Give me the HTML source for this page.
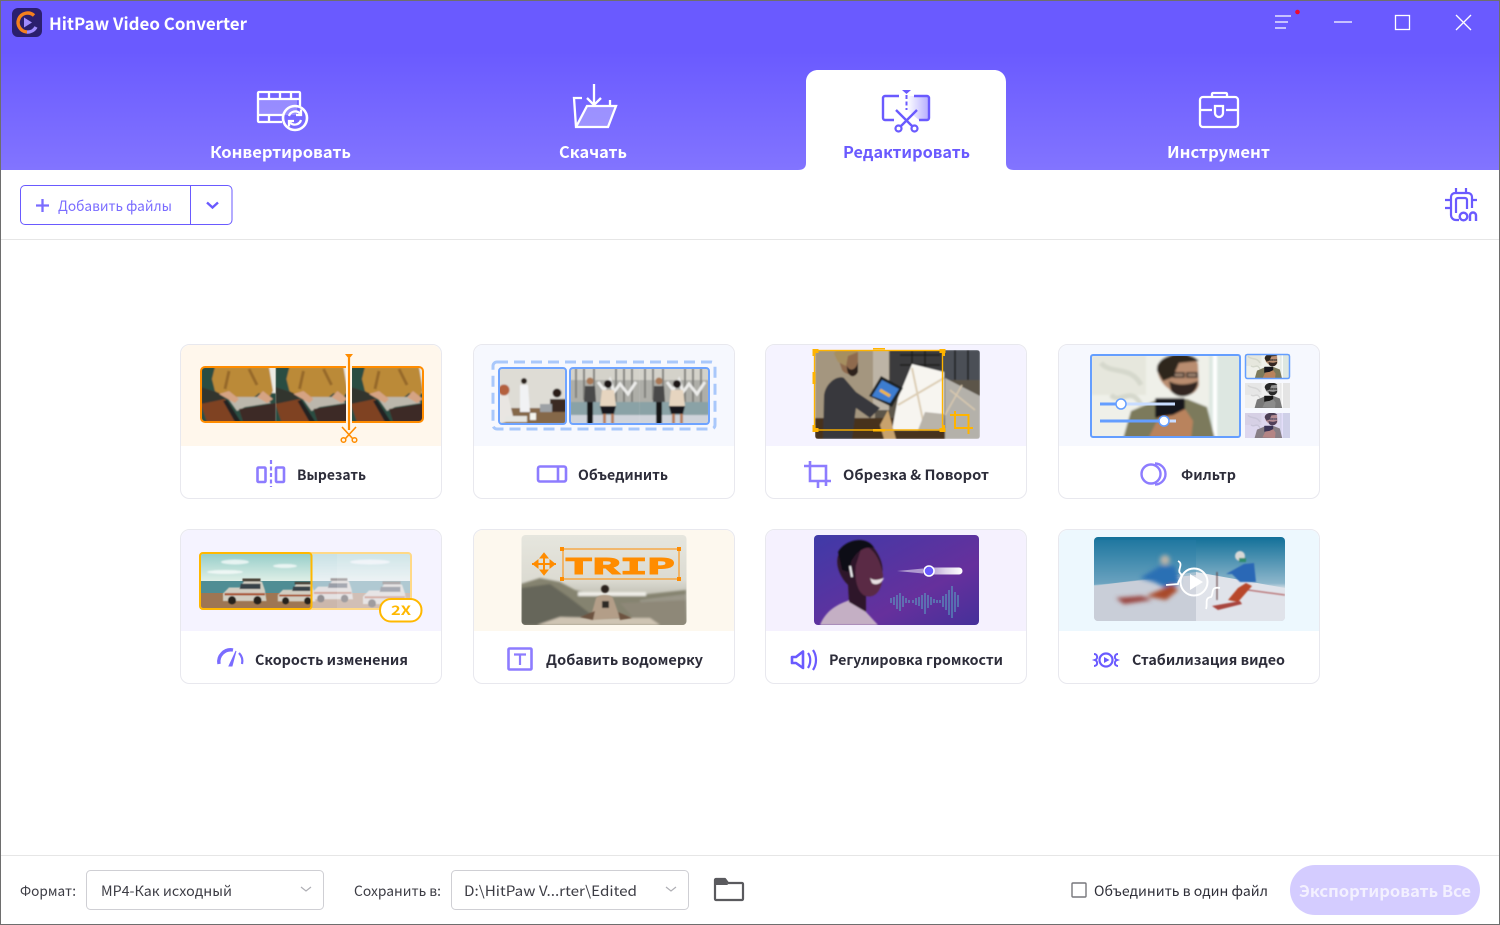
<!DOCTYPE html>
<html lang="ru"><head><meta charset="utf-8"><title>HitPaw Video Converter</title>
<style>
html,body{margin:0;padding:0;background:#fff;width:1500px;height:925px;overflow:hidden}
svg{display:block}
text{font-family:"Noto Sans CJK SC","Liberation Sans",sans-serif}
.h{font-size:16px;font-weight:700;fill:#fff}
.l{font-size:14px;font-weight:700;fill:#2d2d3a}
.f{font-size:14px;fill:#3c3c44}
.w{fill:none;stroke:#fff;stroke-width:2.300}
</style></head><body>
<svg width="1500" height="925" viewBox="0 0 1500 925" xmlns="http://www.w3.org/2000/svg">
<defs>
<linearGradient id="hd" x1="0" y1="0" x2="0" y2="1"><stop offset="0" stop-color="#6a5aff"/><stop offset=".3" stop-color="#6a5aff"/><stop offset="1" stop-color="#8274ff"/></linearGradient>
<linearGradient id="ed" x1="0" y1="0" x2="1" y2="0"><stop offset="0" stop-color="#fff"/><stop offset="1" stop-color="#b5adff"/></linearGradient>
<linearGradient id="pur" x1="0" y1="0" x2="1" y2="1"><stop offset="0" stop-color="#3f3aa8"/><stop offset=".65" stop-color="#66309c"/><stop offset="1" stop-color="#45309a"/></linearGradient>
<linearGradient id="sky" x1="0" y1="0" x2="0" y2="1"><stop offset="0" stop-color="#94cdc8"/><stop offset="1" stop-color="#e2f0e8"/></linearGradient>
<linearGradient id="ski" x1="0" y1="0" x2="0" y2="1"><stop offset="0" stop-color="#127099"/><stop offset=".55" stop-color="#8db6cb"/><stop offset=".62" stop-color="#dfe3e8"/><stop offset="1" stop-color="#c7ccd6"/></linearGradient>
<linearGradient id="sl" x1="0" y1="0" x2="1" y2="0"><stop offset="0" stop-color="#fff" stop-opacity=".5"/><stop offset=".5" stop-color="#fff" stop-opacity=".8"/><stop offset="1" stop-color="#fff"/></linearGradient>
<linearGradient id="mt" x1="0" y1="0" x2="0" y2="1"><stop offset="0" stop-color="#e6e6de"/><stop offset=".5" stop-color="#dcdbd2"/><stop offset="1" stop-color="#8f8d7c"/></linearGradient>
<filter id="b" x="-5%" y="-5%" width="110%" height="110%"><feGaussianBlur stdDeviation=".7"/></filter>
<filter id="m" x="-5%" y="-5%" width="110%" height="110%"><feGaussianBlur stdDeviation="1.100"/></filter>
<filter id="bb" x="-10%" y="-10%" width="120%" height="120%"><feGaussianBlur stdDeviation="2"/></filter>
<clipPath id="c1"><rect x="201" y="367" width="222" height="55" rx="4"/></clipPath>
<clipPath id="c2a"><rect x="499" y="368" width="67" height="56" rx="3"/></clipPath>
<clipPath id="c2b"><rect x="570" y="368" width="139" height="56" rx="3"/></clipPath>
<clipPath id="c3"><rect x="815" y="350" width="165" height="89" rx="3"/></clipPath>
<clipPath id="c4"><rect x="1091" y="355" width="149" height="82" rx="2"/></clipPath>
<clipPath id="c5"><rect x="200" y="553" width="210" height="56" rx="3"/></clipPath>
<clipPath id="c6"><rect x="521.500" y="535" width="165" height="90" rx="4"/></clipPath>
<clipPath id="c7"><rect x="814" y="535" width="165" height="90" rx="4"/></clipPath>
<clipPath id="c8"><rect x="1094" y="537" width="191" height="84" rx="4"/></clipPath>
<clipPath id="c1a"><rect x="0" y="0" width="75" height="55"/></clipPath>

<g id="hands" clip-path="url(#c1a)"><g filter="url(#b)">
<rect width="75" height="55" fill="#2b4d43"/>
<rect x="68" y="0" width="7" height="26" fill="#ecebe4"/>
<path d="M14 0H68L72 24 68 30 58 26 52 31H26L14 24 11 12Z" fill="#bb8a38"/>
<path d="M28 4L24 22M48 2L56 18" stroke="#96692a" stroke-width="3" fill="none"/>
<path d="M0 20L18 26 24 32 6 38 0 36Z" fill="#33352f"/>
<path d="M0 37L24 32 38 55H6Z" fill="#7f4222"/>
<path d="M26 30H62L70 36 44 40 36 44Z" fill="#bcb7ac"/>
<path d="M18 27L34 36 38 32 28 24ZM62 24L72 32 66 36 56 30Z" fill="#d5a383"/>
<path d="M38 42L75 36V55H42Z" fill="#3d2c25"/>
<path d="M26 33L40 55H34L22 34Z" fill="#242424"/>
</g></g>

<g id="couple" filter="url(#b)">
<rect width="70" height="56" fill="#aeaea8"/>
<rect x="0" y="0" width="70" height="12" fill="#d4d2ca"/>
<path d="M6 0V30M14 0V32M24 0V30M46 0V34M54 0V34M62 0V34" stroke="#80807c" stroke-width="2"/>
<path d="M28 14L34 22 40 12 44 24 50 16 58 26 66 14" stroke="#ececea" stroke-width="3" fill="none"/>
<rect x="0" y="34" width="70" height="13" fill="#8aa2a6"/>
<rect x="0" y="47" width="70" height="9" fill="#cfd3da"/>
<circle cx="20" cy="13" r="3.500" fill="#a87854"/>
<path d="M15 18H25L26 34H23L22 56H18L17 34H14Z" fill="#4a4a48"/>
<path d="M17 34H23V56H17Z" fill="#151515"/>
<circle cx="38" cy="16" r="4" fill="#1d1612"/>
<path d="M32 22H44L46 38H30Z" fill="#e6d5c0"/>
<path d="M30 38H46L44 46H32Z" fill="#15151a"/>
<path d="M33 46H36V56H33ZM41 46H44V56H41Z" fill="#b57f5f"/>
</g>

<g id="man" filter="url(#m)">
<rect width="150" height="84" fill="#eff0e9"/>
<path d="M0 0H55V40H0Z" fill="#e6e7dd"/>
<path d="M10 8C20 20 40 10 50 30M20 40C30 50 40 30 50 50" stroke="#d5d8cc" stroke-width="5" fill="none"/>
<rect x="118" y="0" width="32" height="84" fill="#dde7e1"/>
<path d="M124 0V84" stroke="#fff" stroke-width="4"/>
<path d="M32 84L40 56 68 44 96 44 116 52 124 84Z" fill="#7b7a5c"/>
<path d="M66 12C68 0 98 -2 107 8L108 30C104 44 84 44 78 34 72 30 66 22 66 12Z" fill="#b98d6f"/>
<path d="M66 16C64 -2 98 -6 108 6L88 8 82 22 72 26Z" fill="#2e251d"/>
<path d="M78 26C86 31 98 30 107 26 106 42 88 46 80 36Z" fill="#322820"/>
<path d="M83 18H93V22H83ZM96 18H106V22H96Z" fill="#a98b77" stroke="#1e1e1e" stroke-width="1.500"/>
<rect x="64" y="43" width="30" height="20" rx="2" fill="#18181a"/>
<path d="M58 82L68 62 82 60 94 54 102 66 100 84Z" fill="#b9835d"/>
</g>

<g id="car" filter="url(#b)">
<path d="M-28 26L-20 18H-6L0 10H24L28 22 30 36H-28Z" fill="#d2cec2"/>
<path d="M-26 27H28" stroke="#a9532f" stroke-width="3"/>
<path d="M-4 13H22V20H-6Z" fill="#39424a"/>
<circle cx="-16" cy="35" r="5.500" fill="#26241f"/><circle cx="18" cy="35" r="5.500" fill="#26241f"/>
<rect x="-2" y="6" width="24" height="4" fill="#4a4238"/>
</g>
</defs>

<rect width="1500" height="925" fill="#fff"/>
<rect x="0" y="0" width="1500" height="170" fill="url(#hd)"/>

<!-- logo -->
<rect x="12" y="8" width="30" height="29" rx="6" fill="#2b1f6e"/>
<path d="M34 15.500A9.500 9.500 0 1 0 27 32" fill="none" stroke="#f5801f" stroke-width="3.400"/>
<path d="M27 32A9.500 9.500 0 0 0 36 27" fill="none" stroke="#a08cff" stroke-width="3.400"/>
<path d="M24 17.500L32 22.500 24 27.500Z" fill="#a08cff"/>
<text x="49" y="30" class="h" style="font-size:17px" textLength="198" lengthAdjust="spacingAndGlyphs">HitPaw Video Converter</text>

<!-- window controls -->
<path d="M1275 16H1291M1275 22H1288M1275 28H1286" stroke="#fff" stroke-width="1.300" fill="none"/>
<circle cx="1297.500" cy="12" r="2.300" fill="#ef0c2c"/>
<path d="M1334 22H1352" stroke="#fff" stroke-width="1.300"/>
<rect x="1395.500" y="15.500" width="14" height="14" fill="none" stroke="#fff" stroke-width="1.300"/>
<path d="M1456 15L1471 30M1471 15L1456 30" stroke="#fff" stroke-width="1.300"/>

<!-- tab convert icon -->
<rect x="259" y="100" width="38" height="15" fill="#fff" opacity=".25"/>
<path d="M300 106V93a1 1 0 0 0-1-1H259a1 1 0 0 0-1 1V121a1 1 0 0 0 1 1H282" class="w"/>
<path d="M258 99H300M258 115H283M269 92V99M280 92V99M291 92V99M269 115V122" class="w"/>
<circle cx="295" cy="118" r="12" class="w" fill="none" style="stroke-width:2.600"/>
<path d="M289 116a6.500 6.500 0 0 1 11-2.500M301 120a6.500 6.500 0 0 1-11 2.500" class="w"/>
<path d="M301 109.500V115H296M289 126.500V121H294" class="w"/>
<text x="210" y="158" class="h" textLength="141" lengthAdjust="spacingAndGlyphs">Конвертировать</text>

<!-- download icon -->
<path d="M587 106H616L608 127H577Z" fill="#fff" opacity=".28"/>
<path d="M594 84V105M587 98L594 105 601 98" class="w"/>
<path d="M582 98H574L576 127H608L616 106H610V100M610 106H587L576 127" class="w"/>
<text x="559" y="158" class="h" textLength="68" lengthAdjust="spacingAndGlyphs">Скачать</text>

<!-- active tab -->
<path d="M798 170C803 170 806 168 806 163V82C806 75 811 70 818 70H994C1001 70 1006 75 1006 82V163C1006 168 1009 170 1014 170Z" fill="#fff"/>
<path d="M907 96H927a2 2 0 0 1 2 2V118a2 2 0 0 1-2 2H919L907 110Z" fill="url(#ed)" stroke="none"/>
<path d="M899 96H885a2 2 0 0 0-2 2V118a2 2 0 0 0 2 2H894M914 96H927a2 2 0 0 1 2 2V118a2 2 0 0 1-2 2H919" fill="none" stroke="#6a5aff" stroke-width="2.400"/>
<path d="M902 90H911L906.500 94Z" fill="#6a5aff"/>
<path d="M906.500 95V110" stroke="#6a5aff" stroke-width="2" stroke-dasharray="4 2.500"/>
<path d="M896 110L912 126M917 110L901 126" stroke="#6a5aff" stroke-width="2.400" fill="none"/>
<circle cx="898.500" cy="128.500" r="3" fill="none" stroke="#6a5aff" stroke-width="2.200"/>
<circle cx="914.500" cy="128.500" r="3" fill="none" stroke="#6a5aff" stroke-width="2.200"/>
<text x="843" y="158" class="h" style="fill:#6a5aff" textLength="127" lengthAdjust="spacingAndGlyphs">Редактировать</text>

<!-- toolbox icon -->
<path d="M1212 97V94a1 1 0 0 1 1-1H1226a1 1 0 0 1 1 1V97" class="w"/>
<rect x="1200" y="97" width="38" height="30" rx="3" class="w"/>
<path d="M1200 110H1212M1226 110H1238" class="w"/>
<path d="M1215 106H1223V113a4 4 0 0 1-8 0Z" class="w"/>
<text x="1167" y="158" class="h" textLength="103" lengthAdjust="spacingAndGlyphs">Инструмент</text>

<!-- toolbar -->
<rect x="20.500" y="185.500" width="211.500" height="39" rx="4.500" fill="#fff" stroke="#6a5aff"/>
<path d="M190.500 185.500V224.500" stroke="#6a5aff"/>
<path d="M42.500 199V212M36 205.500H49" stroke="#7a6cff" stroke-width="2.300"/>
<text x="58" y="211" class="f" style="fill:#7a6cff" textLength="114" lengthAdjust="spacingAndGlyphs">Добавить файлы</text>
<path d="M207 202.500L212.500 207.500 218 202.500" fill="none" stroke="#6a5aff" stroke-width="2.400"/>
<path d="M0 239.500H1500" stroke="#e6e6e6"/>
<!-- on icon -->
<path d="M1459 220H1456a5 5 0 0 1-5-5V197a4 4 0 0 1 4-4H1468a4 4 0 0 1 4 4V208M1456 213V200a2 2 0 0 1 2-2H1465a2 2 0 0 1 2 2V209M1456 188V193M1466 188V193M1445 200H1451M1445 208H1451M1472 200H1477" fill="none" stroke="#6a5aff" stroke-width="2.200"/>
<circle cx="1463.500" cy="216.500" r="3.800" fill="#fff" stroke="#6a5aff" stroke-width="2.400"/>
<path d="M1470 221V215.500a3 3 0 0 1 6 0V221" fill="none" stroke="#6a5aff" stroke-width="2.400"/>

<!-- cards -->
<g fill="#fff" stroke="#e8e8ee">
<rect x="180.500" y="344.500" width="261" height="154" rx="9"/>
<rect x="473.500" y="344.500" width="261" height="154" rx="9"/>
<rect x="765.500" y="344.500" width="261" height="154" rx="9"/>
<rect x="1058.500" y="344.500" width="261" height="154" rx="9"/>
<rect x="180.500" y="529.500" width="261" height="154" rx="9"/>
<rect x="473.500" y="529.500" width="261" height="154" rx="9"/>
<rect x="765.500" y="529.500" width="261" height="154" rx="9"/>
<rect x="1058.500" y="529.500" width="261" height="154" rx="9"/>
</g>
<path d="M181 446V354a9 9 0 0 1 9-9H432a9 9 0 0 1 9 9V446Z" fill="#fff7ec"/>
<path d="M474 446V354a9 9 0 0 1 9-9H725a9 9 0 0 1 9 9V446Z" fill="#f6f8fe"/>
<path d="M766 446V354a9 9 0 0 1 9-9H1017a9 9 0 0 1 9 9V446Z" fill="#f5f3ff"/>
<path d="M1059 446V354a9 9 0 0 1 9-9H1310a9 9 0 0 1 9 9V446Z" fill="#f6f8fe"/>
<path d="M181 631V539a9 9 0 0 1 9-9H432a9 9 0 0 1 9 9V631Z" fill="#f5f3ff"/>
<path d="M474 631V539a9 9 0 0 1 9-9H725a9 9 0 0 1 9 9V631Z" fill="#fdf8ee"/>
<path d="M766 631V539a9 9 0 0 1 9-9H1017a9 9 0 0 1 9 9V631Z" fill="#f5f1fe"/>
<path d="M1059 631V539a9 9 0 0 1 9-9H1310a9 9 0 0 1 9 9V631Z" fill="#edf8fe"/>

<!-- card 1 -->
<g clip-path="url(#c1)">
<use href="#hands" transform="translate(201 367)"/>
<use href="#hands" transform="translate(275.500 367)"/>
<use href="#hands" transform="translate(351 367)"/>
</g>
<rect x="201" y="367" width="222" height="55" rx="4" fill="none" stroke="#ff8c00" stroke-width="2"/>
<rect x="346" y="358" width="6" height="72" fill="#fff7ec"/>
<path d="M349 358V430" stroke="#ff8c00" stroke-width="2.200"/>
<path d="M345 354H353L349 359Z" fill="#ff8c00"/>
<path d="M342 427L353 439M356 427L345 439" stroke="#ff8c00" stroke-width="1.600" fill="none"/>
<circle cx="343.500" cy="440" r="2.300" fill="none" stroke="#ff8c00" stroke-width="1.500"/>
<circle cx="354.500" cy="440" r="2.300" fill="none" stroke="#ff8c00" stroke-width="1.500"/>
<g fill="none" stroke="#8d7cff" stroke-width="2.600">
<rect x="257.500" y="467.500" width="8" height="14.500" rx="1"/>
<rect x="276" y="467.500" width="8" height="14.500" rx="1"/>
</g>
<path d="M271 460V487" stroke="#8d7cff" stroke-width="2.200" stroke-dasharray="4 2.500"/>
<text x="297" y="480" class="l" textLength="69" lengthAdjust="spacingAndGlyphs">Вырезать</text>

<!-- card 2 -->
<rect x="493" y="362" width="222" height="67" rx="4" fill="none" stroke="#a9c8fb" stroke-width="3" stroke-dasharray="11 6"/>
<g clip-path="url(#c2a)"><g filter="url(#b)">
<rect x="499" y="368" width="67" height="56" fill="#dedcd5"/>
<rect x="499" y="408" width="67" height="16" fill="#85674a"/>
<path d="M498 388C502 384 510 386 508 396L514 420 499 424Z" fill="#e9e6e2"/>
<circle cx="504" cy="390" r="5.500" fill="#b4603d"/>
<circle cx="524" cy="381" r="3" fill="#2b211b"/>
<path d="M520 385H528L530 412H520Z" fill="#f1f2f4"/>
<circle cx="557" cy="393" r="4.500" fill="#2a1e18"/>
<path d="M550 399H566V412H550Z" fill="#3a2c24"/>
<rect x="540" y="404" width="12" height="8" fill="#9da1a5"/>
<rect x="530" y="413" width="6" height="7" fill="#f5f5f0"/>
<rect x="505" y="416" width="22" height="6" fill="#e6e6e2"/>
</g></g>
<g clip-path="url(#c2b)">
<use href="#couple" transform="translate(570 368)"/>
<use href="#couple" transform="translate(639 368)"/>
</g>
<rect x="499" y="368" width="67" height="56" rx="3" fill="none" stroke="#6ea3ff" stroke-width="2"/>
<rect x="570" y="368" width="139" height="56" rx="3" fill="none" stroke="#6ea3ff" stroke-width="2"/>
<rect x="538" y="466.500" width="28" height="15" rx="2" fill="none" stroke="#8d7cff" stroke-width="2.600"/>
<path d="M558 466V482" stroke="#8d7cff" stroke-width="2.600"/>
<text x="578" y="480" class="l" textLength="90" lengthAdjust="spacingAndGlyphs">Объединить</text>

<!-- card 3 -->
<g clip-path="url(#c3)"><g filter="url(#b)">
<rect x="815" y="350" width="165" height="89" fill="#5c5549"/>
<rect x="815" y="350" width="60" height="75" fill="#a4967f"/>
<rect x="873" y="350" width="16" height="60" fill="#bdb4a6"/>
<rect x="890" y="350" width="53" height="38" fill="#3a3a3c"/>
<rect x="943" y="350" width="37" height="30" fill="#4c5056"/>
<path d="M900 355H940M900 365H940M912 350V385M925 350V385M955 350V380M968 350V380" stroke="#1b1b1c" stroke-width="1.500"/>
<rect x="815" y="418" width="165" height="21" fill="#46301f"/>
<path d="M945 378L980 396V439H945Z" fill="#b4b1aa"/>
<path d="M898 398L912 364 944 372V430H892Z" fill="#f7f5f0"/>
<path d="M912 368L925 430M898 405L944 378" stroke="#dccdb4" stroke-width="2"/>
<path d="M925 412L944 414V430H918Z" fill="#b9b4aa"/>
<path d="M945 415L962 385M950 390L975 410" stroke="#d8c8ae" stroke-width="1.500"/>
<path d="M823 439L824 395C826 382 838 375 844 378L856 392 880 408 870 418 856 408 852 439Z" fill="#37383c"/>
<path d="M836 352H858V368C856 376 846 376 842 370Z" fill="#8f6a4e"/>
<path d="M834 354C836 346 856 344 858 352L848 356 846 366 838 362Z" fill="#a68f60"/>
<path d="M847 366C850 372 856 370 858 362V372C854 380 846 376 847 366Z" fill="#2d221b"/>
<path d="M869 396L881 376 903 388 892 407Z" fill="#1f2024"/>
<path d="M872 396L882 380 899 389 890 403Z" fill="#3e7dd0"/>
<path d="M880 390L890 396" stroke="#efb640" stroke-width="3"/>
<path d="M880 425L888 410 896 439H884Z" fill="#c8a26d"/>
</g></g>
<rect x="814.500" y="350.500" width="128" height="79.500" fill="none" stroke="#ffb400" stroke-width="1.400"/>
<g fill="#ffb400">
<rect x="812.500" y="349" width="6" height="4"/><rect x="812.500" y="349" width="3" height="7"/>
<rect x="939.500" y="349" width="6" height="4"/><rect x="942" y="349" width="3" height="7"/>
<rect x="812.500" y="428" width="6" height="4"/><rect x="812.500" y="425" width="3" height="7"/>
<rect x="939.500" y="428" width="6" height="4"/><rect x="942" y="425" width="3" height="7"/>
<rect x="873" y="348" width="12" height="1.500"/>
<rect x="873" y="429" width="12" height="2.500"/>
<rect x="812.500" y="372" width="3" height="12"/>
</g>
<path d="M950 415H968.500V434M955 411V428H973" fill="none" stroke="#ffb400" stroke-width="2"/>
<path d="M804 466H826V486M810 461V481H831M818 481V488" fill="none" stroke="#8d7cff" stroke-width="2.600"/>
<text x="843" y="480" class="l" textLength="146" lengthAdjust="spacingAndGlyphs">Обрезка &amp; Поворот</text>

<!-- card 4 -->
<g clip-path="url(#c4)"><use href="#man" transform="translate(1091 355)"/></g>
<rect x="1091" y="355" width="149" height="82" rx="2" fill="none" stroke="#649eff" stroke-width="2"/>
<path d="M1100 404H1175" stroke="#c8dcff" stroke-width="3"/>
<path d="M1100 404H1121" stroke="#649eff" stroke-width="3"/>
<circle cx="1121" cy="404" r="5" fill="#fff" stroke="#649eff" stroke-width="1.500"/>
<path d="M1100 421H1176" stroke="#c8dcff" stroke-width="3"/>
<path d="M1100 421H1164" stroke="#649eff" stroke-width="3"/>
<circle cx="1164" cy="421" r="5" fill="#fff" stroke="#649eff" stroke-width="1.500"/>
<g transform="translate(1245 354)"><svg width="45" height="25" viewBox="0 0 150 84" preserveAspectRatio="none"><use href="#man"/></svg></g>
<rect x="1245.500" y="354.500" width="44" height="24" rx="2" fill="none" stroke="#649eff" stroke-width="1.500"/>
<g transform="translate(1245 383)" style="filter:grayscale(1)"><svg width="45" height="25" viewBox="0 0 150 84" preserveAspectRatio="none"><use href="#man"/></svg></g>
<g transform="translate(1245 413)"><svg width="45" height="25" viewBox="0 0 150 84" preserveAspectRatio="none"><use href="#man"/><rect width="150" height="84" fill="#a98cff" opacity=".25"/></svg></g>
<circle cx="1151" cy="474" r="9.500" fill="none" stroke="#8d7cff" stroke-width="2.400"/>
<path d="M1155 463.500A10.500 10.500 0 0 1 1155 484.500" fill="none" stroke="#8d7cff" stroke-width="2.400"/>
<text x="1181" y="480" class="l" textLength="55" lengthAdjust="spacingAndGlyphs">Фильтр</text>

<!-- card 5 -->
<g clip-path="url(#c5)">
<rect x="200" y="553" width="210" height="29" fill="url(#sky)"/>
<g fill="#fff" opacity=".7" filter="url(#b)"><ellipse cx="235" cy="562" rx="14" ry="2.500"/><ellipse cx="285" cy="566" rx="12" ry="2"/><ellipse cx="225" cy="572" rx="18" ry="2"/><ellipse cx="370" cy="562" rx="20" ry="2.500"/></g>
<rect x="200" y="581" width="210" height="13" fill="#4f8d94"/>
<rect x="200" y="593" width="210" height="16" fill="#9e7653"/>
<use href="#car" transform="translate(244 574) scale(.75)"/>
<use href="#car" transform="translate(296 578) scale(.65)"/>
<use href="#car" transform="translate(332 574) scale(.7)"/>
<use href="#car" transform="translate(384 577) scale(.75)"/>
<rect x="312" y="553" width="98" height="56" fill="#f5f3ff" opacity=".52"/>
<rect x="337" y="553" width="75" height="56" fill="#fff" opacity=".12"/>
</g>
<rect x="200" y="553" width="211" height="56" rx="3" fill="none" stroke="#ffd987" stroke-width="2"/>
<rect x="200" y="553" width="111.500" height="56" rx="3" fill="none" stroke="#ffb800" stroke-width="2"/>
<rect x="380" y="599" width="41.500" height="22.500" rx="11" fill="#fff" stroke="#ffb800" stroke-width="2"/>
<text x="391" y="615" style="font-size:13px;font-weight:700;fill:#ffb800" textLength="20" lengthAdjust="spacingAndGlyphs">2X</text>
<path d="M219 664A12 12 0 0 1 233 650" fill="none" stroke="#7a6cff" stroke-width="3.400"/>
<path d="M239 653A12 12 0 0 1 242 664" fill="none" stroke="#7a6cff" stroke-width="2.200"/>
<path d="M236 651L229 666 232 666Z" fill="#7a6cff" stroke="#7a6cff"/>
<text x="255" y="665" class="l" textLength="153" lengthAdjust="spacingAndGlyphs">Скорость изменения</text>

<!-- card 6 -->
<g clip-path="url(#c6)">
<rect x="521.500" y="535" width="165" height="90" fill="url(#mt)"/>
<g filter="url(#m)">
<path d="M521 584L540 578 560 582 575 590 600 596 640 595 686 590V625H521Z" fill="#85836f"/>
<path d="M521 588L550 584 570 598 605 625H521Z" fill="#66665a"/>
<rect x="578" y="592" width="68" height="4" fill="#efeee8"/>
<path d="M640 600L686 594V625H640Z" fill="#9a9688"/>
<path d="M620 603L686 600V625H640Z" fill="#8e8878"/>
<path d="M537 625L560 617 600 618 650 618 660 625Z" fill="#cfc4b3"/>
</g>
<g filter="url(#b)">
<circle cx="605" cy="589" r="4" fill="#2c221c"/>
<path d="M590 620L596 598C600 594 610 594 613 598L620 618Z" fill="#b39e88"/>
<rect x="602" y="601" width="7" height="7" fill="#2d2a28"/>
<path d="M580 617L595 611 593 620ZM618 612L632 618 620 620Z" fill="#6d5240"/>
</g>
</g>
<text x="565" y="574" style="font-family:'Liberation Mono','DejaVu Sans Mono',monospace;font-size:24px;font-weight:700;fill:#ff8c00;stroke:#ff8c00;stroke-width:1" textLength="110" lengthAdjust="spacingAndGlyphs">TRIP</text>
<rect x="563" y="549" width="116" height="30" fill="none" stroke="#ff8c00" stroke-width="1"/>
<g fill="#ff8c00"><rect x="560" y="547" width="4" height="4"/><rect x="677" y="547" width="4" height="4"/><rect x="560" y="577" width="4" height="4"/><rect x="677" y="577" width="4" height="4"/></g>
<path d="M544 556V572M532 564H556" stroke="#ff8c00" stroke-width="2"/>
<path d="M540 558L544 553 548 558ZM540 570L544 575 548 570ZM538 560L533 564 538 568ZM550 560L555 564 550 568Z" fill="#ff8c00" stroke="#ff8c00"/>
<rect x="508.500" y="648.500" width="23" height="21" rx="1" fill="none" stroke="#8d7cff" stroke-width="2.600"/>
<path d="M514 654.500H526M520 654.500V665" stroke="#8d7cff" stroke-width="2.200"/>
<text x="546" y="665" class="l" textLength="157" lengthAdjust="spacingAndGlyphs">Добавить водомерку</text>

<!-- card 7 -->
<g clip-path="url(#c7)">
<rect x="814" y="535" width="165" height="90" fill="url(#pur)"/>
<g filter="url(#b)">
<path d="M820 625C826 610 838 604 850 600L866 612 878 625Z" fill="#c4afc4"/>
<path d="M849 602L848 585C838 575 834 560 840 552 848 538 868 536 874 548 880 556 884 566 882 574 882 590 876 598 866 596L866 612Z" fill="#2f1829"/>
<path d="M862 546C872 546 880 558 883 575 882 590 876 598 866 596 858 594 854 580 856 565Z" fill="#5a2a45"/>
<path d="M838 552C846 538 868 536 874 548 866 546 858 550 852 560L848 572 842 570Z" fill="#100c16"/>
<path d="M870 578C874 581 878 580 884 578 882 583 876 586 872 583Z" fill="#e8dfe2"/>
<path d="M850 566L852 577" stroke="#f2f2f5" stroke-width="2"/>
</g>
<path d="M897 571L923 568.500V573.500Z" fill="#fff" opacity=".5"/>
<path d="M929 567.500H959a3.500 3.500 0 0 1 0 7H929Z" fill="url(#sl)"/>
<circle cx="929" cy="571" r="5" fill="#6a5aff" stroke="#fff" stroke-width="1.600"/>
<path d="M891 598V603M894 597V605M897 595V609M900 593V611M903 596V607M906 598V603M909 600V603M913 600V603M916 598V605M919 597V606M922 595V609M925 593V614M928 595V608M931 597V605M934 599V603M937 600V603M940 600V603M943 596V607M946 594V610M949 590V615M952 586V618M955 592V612M958 595V607" stroke="#59c3cf" stroke-width="1.200" opacity=".7"/>
</g>
<path d="M792 657H796L803 651.500V668L796 663H792Z" fill="none" stroke="#6a5aff" stroke-width="2.600" stroke-linejoin="round"/>
<path d="M808 653C811 657 811 663 808 668M813 650C817 656 817 664 813 670" fill="none" stroke="#6a5aff" stroke-width="2.200"/>
<text x="829" y="665" class="l" textLength="174" lengthAdjust="spacingAndGlyphs">Регулировка громкости</text>

<!-- card 8 -->
<g clip-path="url(#c8)">
<rect x="1094" y="537" width="191" height="84" fill="url(#ski)"/>
<path d="M1094 586L1196 572V621H1094Z" fill="#c9ced8"/>
<path d="M1196 572L1285 588V621H1196Z" fill="#e0e3ea"/>
<path d="M1094 540H1196V575L1094 585Z" fill="#2b7fa8" opacity=".35"/>
<g filter="url(#bb)">
<circle cx="1165" cy="560" r="5" fill="#b7b2a8"/>
<path d="M1140 578L1160 566 1175 566 1180 582 1170 590 1154 582Z" fill="#2c6fb4"/>
<path d="M1146 596L1160 590 1172 584 1178 590 1166 600Z" fill="#a8492c"/>
<path d="M1116 598L1142 596 1152 600 1124 604Z" fill="#97403a"/>
</g>
<g filter="url(#b)">
<circle cx="1240" cy="556" r="5" fill="#d8d8d6"/>
<path d="M1239 558H1246V562H1239Z" fill="#2d8c6d"/>
<path d="M1226 574L1244 564 1254 563 1256 582 1240 582 1232 574Z" fill="#2a67b6"/>
<path d="M1228 600L1238 588 1246 583 1252 586 1238 602Z" fill="#b8472a"/>
<path d="M1212 606L1240 601 1242 604 1218 610Z" fill="#a8443c"/>
<path d="M1248 590L1285 595" stroke="#a94646" stroke-width="1"/>
<path d="M1217 572L1217 600" stroke="#5a3030" stroke-width="1"/>
</g>
</g>
<circle cx="1194" cy="582" r="13.500" fill="#fff" fill-opacity=".18" stroke="#fff" stroke-width="2"/>
<path d="M1190 574L1203 582 1190 590Z" fill="#fff"/>
<path d="M1178 561C1184 564 1177 570 1180 573 1184 576 1178 580 1178 584L1166 585" fill="none" stroke="#fff" stroke-width="1.800"/>
<path d="M1220 588C1210 586 1214 594 1211 597 1204 598 1208 604 1206 609" fill="none" stroke="#fff" stroke-width="1.800"/>
<circle cx="1106" cy="660" r="6.500" fill="none" stroke="#6a5aff" stroke-width="2.200"/>
<path d="M1104 657L1109.500 660 1104 663Z" fill="#6a5aff"/>
<path d="M1094 654C1098 654 1098 659 1095 660 1098 661 1098 666 1094 666M1118 654C1114 654 1114 659 1117 660 1114 661 1114 666 1118 666" fill="none" stroke="#6a5aff" stroke-width="2"/>
<text x="1132" y="665" class="l" textLength="153" lengthAdjust="spacingAndGlyphs">Стабилизация видео</text>

<!-- footer -->
<path d="M0 855.500H1500" stroke="#e6e6e6"/>
<text x="20" y="896" class="f" textLength="56" lengthAdjust="spacingAndGlyphs">Формат:</text>
<rect x="86.500" y="870.500" width="237" height="39" rx="4" fill="#fff" stroke="#cfcfd4"/>
<text x="101" y="896" class="f" textLength="131" lengthAdjust="spacingAndGlyphs">MP4-Как исходный</text>
<path d="M301 887L306 891 311 887" fill="none" stroke="#aeaeb4" stroke-width="1.200"/>
<text x="354" y="896" class="f" textLength="87" lengthAdjust="spacingAndGlyphs">Сохранить в:</text>
<rect x="451.500" y="870.500" width="237" height="39" rx="4" fill="#fff" stroke="#cfcfd4"/>
<text x="464" y="896" class="f" textLength="173" lengthAdjust="spacingAndGlyphs">D:\HitPaw V...rter\Edited</text>
<path d="M666 887L671 891 676 887" fill="none" stroke="#aeaeb4" stroke-width="1.200"/>
<path d="M715 880a1 1 0 0 1 1-1H725L728 883H742a1 1 0 0 1 1 1V899a1 1 0 0 1-1 1H716a1 1 0 0 1-1-1Z" fill="none" stroke="#5a5a5e" stroke-width="2.200" stroke-linejoin="round"/>
<path d="M715 880H725L728 885H715Z" fill="#5a5a5e"/>
<rect x="1072" y="883" width="14" height="14" rx="1" fill="#fff" stroke="#77777c" stroke-width="1.400"/>
<text x="1094" y="896" class="f" style="fill:#2f2f38" textLength="174" lengthAdjust="spacingAndGlyphs">Объединить в один файл</text>
<rect x="1290" y="865" width="190" height="50" rx="25" fill="#d4ccff"/>
<text x="1299" y="897" class="h" textLength="172" lengthAdjust="spacingAndGlyphs" style="fill:#f3f0ff">Экспортировать Все</text>

<!-- window border -->
<rect x=".5" y=".5" width="1499" height="924" fill="none" stroke="#6e6e6e"/>
</svg>
</body></html>
